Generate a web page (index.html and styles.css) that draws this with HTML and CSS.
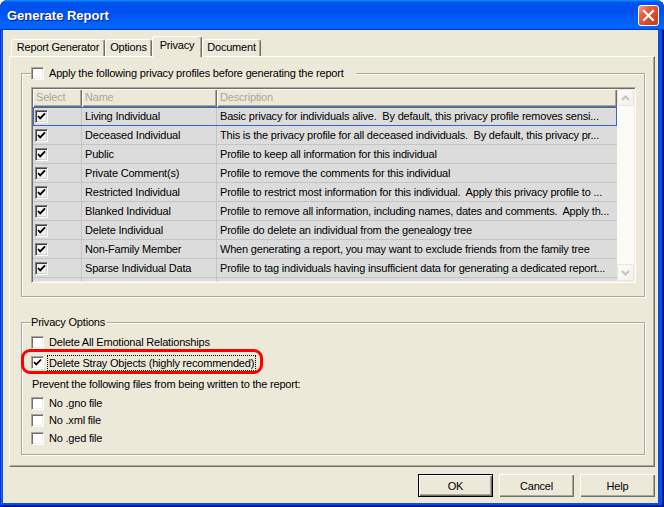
FILE: index.html
```html
<!DOCTYPE html>
<html>
<head>
<meta charset="utf-8">
<title>Generate Report</title>
<link rel="stylesheet" href="styles.css">
</head>
<body>
<div class="window">
  <div class="titlebar">
    <span class="title">Generate Report</span>
    <div class="close">
      <svg width="19" height="19" viewBox="0 0 19 19"><path d="M5 5 L14 14 M14 5 L5 14" stroke="#fff" stroke-width="2.2" stroke-linecap="square"/></svg>
    </div>
  </div>
  <div class="client">
    <div class="tabs">
      <div class="tab t-rg">Report Generator</div>
      <div class="tab t-op">Options</div>
      <div class="tab t-pr active">Privacy</div>
      <div class="tab t-do">Document</div>
    </div>
    <div class="panel">
      <fieldset class="group g1">
        <legend class="legend-cb"><span class="cb"></span><span>Apply the following privacy profiles before generating the report</span></legend>
        <div class="list">
          <div class="grid">
            <div class="hdr">
              <div class="hc c1">Select</div>
              <div class="hc c2">Name</div>
              <div class="hc c3">Description</div>
            </div>
            <div class="row focus">
              <div class="cell c1"><span class="gcb"><svg width="9" height="9" viewBox="0 0 9 9"><path d="M1 4 L3.2 6.4 L8 1.4" fill="none" stroke="#000" stroke-width="1.8"/></svg></span></div>
              <div class="cell c2">Living Individual</div>
              <div class="cell c3">Basic privacy for individuals alive.  By default, this privacy profile removes sensi...</div>
            </div>
            <div class="row">
              <div class="cell c1"><span class="gcb"><svg width="9" height="9" viewBox="0 0 9 9"><path d="M1 4 L3.2 6.4 L8 1.4" fill="none" stroke="#000" stroke-width="1.8"/></svg></span></div>
              <div class="cell c2">Deceased Individual</div>
              <div class="cell c3">This is the privacy profile for all deceased individuals.  By default, this privacy pr...</div>
            </div>
            <div class="row">
              <div class="cell c1"><span class="gcb"><svg width="9" height="9" viewBox="0 0 9 9"><path d="M1 4 L3.2 6.4 L8 1.4" fill="none" stroke="#000" stroke-width="1.8"/></svg></span></div>
              <div class="cell c2">Public</div>
              <div class="cell c3">Profile to keep all information for this individual</div>
            </div>
            <div class="row">
              <div class="cell c1"><span class="gcb"><svg width="9" height="9" viewBox="0 0 9 9"><path d="M1 4 L3.2 6.4 L8 1.4" fill="none" stroke="#000" stroke-width="1.8"/></svg></span></div>
              <div class="cell c2">Private Comment(s)</div>
              <div class="cell c3">Profile to remove the comments for this individual</div>
            </div>
            <div class="row">
              <div class="cell c1"><span class="gcb"><svg width="9" height="9" viewBox="0 0 9 9"><path d="M1 4 L3.2 6.4 L8 1.4" fill="none" stroke="#000" stroke-width="1.8"/></svg></span></div>
              <div class="cell c2">Restricted Individual</div>
              <div class="cell c3">Profile to restrict most information for this individual.  Apply this privacy profile to ...</div>
            </div>
            <div class="row">
              <div class="cell c1"><span class="gcb"><svg width="9" height="9" viewBox="0 0 9 9"><path d="M1 4 L3.2 6.4 L8 1.4" fill="none" stroke="#000" stroke-width="1.8"/></svg></span></div>
              <div class="cell c2">Blanked Individual</div>
              <div class="cell c3">Profile to remove all information, including names, dates and comments.  Apply th...</div>
            </div>
            <div class="row">
              <div class="cell c1"><span class="gcb"><svg width="9" height="9" viewBox="0 0 9 9"><path d="M1 4 L3.2 6.4 L8 1.4" fill="none" stroke="#000" stroke-width="1.8"/></svg></span></div>
              <div class="cell c2">Delete Individual</div>
              <div class="cell c3">Profile do delete an individual from the genealogy tree</div>
            </div>
            <div class="row">
              <div class="cell c1"><span class="gcb"><svg width="9" height="9" viewBox="0 0 9 9"><path d="M1 4 L3.2 6.4 L8 1.4" fill="none" stroke="#000" stroke-width="1.8"/></svg></span></div>
              <div class="cell c2">Non-Family Member</div>
              <div class="cell c3">When generating a report, you may want to exclude friends from the family tree</div>
            </div>
            <div class="row">
              <div class="cell c1"><span class="gcb"><svg width="9" height="9" viewBox="0 0 9 9"><path d="M1 4 L3.2 6.4 L8 1.4" fill="none" stroke="#000" stroke-width="1.8"/></svg></span></div>
              <div class="cell c2">Sparse Individual Data</div>
              <div class="cell c3">Profile to tag individuals having insufficient data for generating a dedicated report...</div>
            </div>
            <div class="row">
              <div class="cell c1"><span class="gcb"></span></div>
              <div class="cell c2"></div>
              <div class="cell c3"></div>
            </div>
          </div>
          <div class="vscroll">
            <div class="sbtn"><svg width="9" height="6" viewBox="0 0 9 6"><path d="M1 5 L4.5 1.5 L8 5" fill="none" stroke="#c6c5bc" stroke-width="2"/></svg></div>
            <div class="sbtn"><svg width="9" height="6" viewBox="0 0 9 6"><path d="M1 1 L4.5 4.5 L8 1" fill="none" stroke="#c6c5bc" stroke-width="2"/></svg></div>
          </div>
        </div>
      </fieldset>

      <fieldset class="group g2">
        <legend class="legend-txt">Privacy Options</legend>
        <div class="opt"><span class="cb"></span><span>Delete All Emotional Relationships</span></div>
        <div class="opt opt-2">
          <span class="cb"><svg width="11" height="11" viewBox="0 0 11 11"><path d="M2 5 L4.3 7.5 L9 2.5" fill="none" stroke="#000" stroke-width="1.8"/></svg></span>
          <span class="focus-label">Delete Stray Objects (highly recommended)</span>
          <span class="annot"></span>
        </div>
        <div class="note">Prevent the following files from being written to the report:</div>
        <div class="opt opt-3"><span class="cb"></span><span>No .gno file</span></div>
        <div class="opt opt-4"><span class="cb"></span><span>No .xml file</span></div>
        <div class="opt opt-5"><span class="cb"></span><span>No .ged file</span></div>
      </fieldset>
    </div>
    <div class="buttons">
      <div class="btn default">OK</div>
      <div class="btn">Cancel</div>
      <div class="btn">Help</div>
    </div>
  </div>
</div>
</body>
</html>
```
FILE: styles.css
```css
html, body {
  margin: 0;
  padding: 0;
  background: #fff;
}
body {
  font-family: "Liberation Sans", Arial, sans-serif;
  font-size: 11px;
  color: #000;
  letter-spacing: -0.2px;
}
.window {
  width: 664px;
  height: 507px;
  box-sizing: border-box;
  padding: 0 6px 4px 3px;
  background: #0a4fe0;
  border-radius: 8px 8px 0 0;
  overflow: hidden;
  display: flex;
  flex-direction: column;
  box-shadow: inset 1px 0 #0831d9, inset -1px -1px #00138c, inset -2px -2px #001ea0, inset 2px 0 #166aee;
}
.titlebar {
  height: 30px;
  flex: none;
  margin: 0 -6px 0 -3px;
  padding: 0 5px 0 7px;
  display: flex;
  justify-content: space-between;
  align-items: flex-start;
  background: linear-gradient(180deg, #0997ff, #0053ee 8%, #0050ee 40%, #0066ff 88%, #0066ff 93%, #005bff 95%, #003dd7 96%, #003dd7);
}
.title {
  color: #fff;
  font-weight: bold;
  font-size: 13px;
  line-height: 14px;
  margin-top: 9px;
  letter-spacing: 0;
  text-shadow: 1px 1px #0f1b8a;
}
.close {
  width: 21px;
  height: 21px;
  margin-top: 5px;
  box-sizing: border-box;
  border: 1px solid #fff;
  border-radius: 3px;
  background: linear-gradient(135deg, #f3a08a 0%, #e4643f 30%, #d9472a 65%, #c43a1c 100%);
  display: flex;
  align-items: center;
  justify-content: center;
}
.close svg { display: block; }
.client {
  flex: 1;
  background: #ece9d8;
  padding: 6px 3px 6px 6px;
  display: flex;
  flex-direction: column;
}
.tabs {
  display: flex;
  align-items: flex-end;
  height: 20px;
  margin-left: 2px;
}
.tab {
  height: 17px;
  box-sizing: border-box;
  border-top: 1px solid #fff;
  border-left: 1px solid #fff;
  border-right: 1px solid #716f64;
  box-shadow: inset -1px 0 #aca899;
  border-radius: 3px 3px 0 0;
  text-align: center;
  line-height: 15px;
  background: #ece9d8;
}
.t-rg { width: 94px; }
.t-op { width: 47px; }
.t-pr { width: 50px; }
.t-do { width: 59px; }
.tab.active {
  height: 21px;
  margin-bottom: -1px;
  position: relative;
  z-index: 1;
  line-height: 17px;
}
.panel {
  width: 646px;
  height: 411px;
  box-sizing: border-box;
  border-top: 1px solid #fff;
  border-left: 1px solid #fff;
  border-right: 1px solid #716f64;
  border-bottom: 1px solid #716f64;
  box-shadow: inset -1px -1px #aca899;
  padding: 10px 0 0 11px;
}
.group {
  margin: 0;
  width: 624px;
  min-width: 0;
  box-sizing: border-box;
  border: 1px solid #aca899;
  box-shadow: inset 1px 1px #fff, 1px 1px #fff;
  padding: 7px 8px 13px 9px;
}
.g2 {
  margin-top: 19px;
  padding-bottom: 9px;
}
legend {
  padding: 0;
  line-height: 13px;
  height: 13px;
  background: #ece9d8;
}
.legend-cb {
  display: flex;
  align-items: center;
  gap: 5px;
  padding-right: 12px;
}
.legend-txt {
  padding-right: 2px;
}
.cb {
  width: 13px;
  height: 13px;
  flex: none;
  box-sizing: border-box;
  background: #fff;
  border: 1px solid;
  border-color: #aca899 #fff #fff #aca899;
  box-shadow: inset 1px 1px #716f64, inset -1px -1px #f1efe2;
  display: flex;
  align-items: center;
  justify-content: center;
}
.cb svg { display: block; }
.list {
  display: flex;
  width: 605px;
  height: 196px;
  box-sizing: border-box;
  border: 1px solid;
  border-color: #aca899 #fff #fff #aca899;
  box-shadow: inset 1px 1px #716f64, inset -1px -1px #f1efe2;
  padding: 1px;
  background: #dcdcdc;
}
.grid {
  width: 584px;
  flex: none;
  overflow: hidden;
}
.hdr {
  display: flex;
  height: 18px;
  background: #ece9d8;
}
.hc {
  box-sizing: border-box;
  height: 18px;
  color: #aca899;
  padding-left: 3px;
  line-height: 17px;
  box-shadow: inset 1px 1px #fff, inset -1px -1px #716f64, inset -2px -2px #aca899;
  overflow: hidden;
  white-space: nowrap;
}
.c1 { width: 49px; flex: none; }
.c2 { width: 135px; flex: none; }
.c3 { width: 400px; flex: none; }
.row {
  display: flex;
  height: 19px;
  box-sizing: border-box;
  border-bottom: 1px solid #c4c4c4;
}
.row.focus {
  outline: 1px solid #316ac5;
  outline-offset: -1px;
}
.cell {
  box-sizing: border-box;
  border-right: 1px solid #c4c4c4;
  padding-left: 3px;
  line-height: 18px;
  white-space: pre;
  overflow: hidden;
}
.cell.c1 {
  padding: 3px 0 0 2px;
}
.cell.c3 { border-right: none; }
.gcb {
  display: flex;
  align-items: center;
  justify-content: center;
  width: 13px;
  height: 13px;
  box-sizing: border-box;
  background: #f0f0f0;
  border: 1px solid;
  border-color: #808080 #fff #fff #808080;
  box-shadow: inset 1px 1px #404040, inset -1px -1px #d4d0c8;
}
.gcb svg { display: block; }
.vscroll {
  width: 17px;
  flex: none;
  display: flex;
  flex-direction: column;
  justify-content: space-between;
  background: #fbfbf8;
}
.sbtn {
  width: 17px;
  height: 17px;
  box-sizing: border-box;
  border: 1px solid #e6e5de;
  border-radius: 2px;
  background: linear-gradient(135deg, #fdfdfb, #f1f0ea);
  display: flex;
  align-items: center;
  justify-content: center;
}
.opt {
  display: flex;
  align-items: center;
  gap: 5px;
  height: 13px;
  line-height: 13px;
  white-space: nowrap;
}
.opt-2 {
  margin-top: 7px;
  position: relative;
}
.focus-label {
  border: 1px dotted #000;
  padding: 0 1px;
  margin-left: -2px;
  line-height: 14px;
}
.annot {
  position: absolute;
  left: -10px;
  top: -7px;
  width: 242px;
  height: 25px;
  box-sizing: border-box;
  border: 3px solid #f00;
  border-radius: 9px;
}
.note {
  margin-top: 9px;
  padding-left: 1px;
  line-height: 13px;
  white-space: nowrap;
}
.opt-3 { margin-top: 6px; }
.opt-4 { margin-top: 4px; }
.opt-5 { margin-top: 5px; }
.buttons {
  display: flex;
  justify-content: flex-end;
  gap: 6px;
  margin-top: 7px;
}
.btn {
  width: 75px;
  height: 23px;
  box-sizing: border-box;
  background: #ece9d8;
  box-shadow: inset 1px 1px #fff, inset -1px -1px #716f64, inset -2px -2px #aca899;
  display: flex;
  align-items: center;
  justify-content: center;
  font-size: 11px;
}
.btn.default {
  border: 1px solid #000;
}
```
